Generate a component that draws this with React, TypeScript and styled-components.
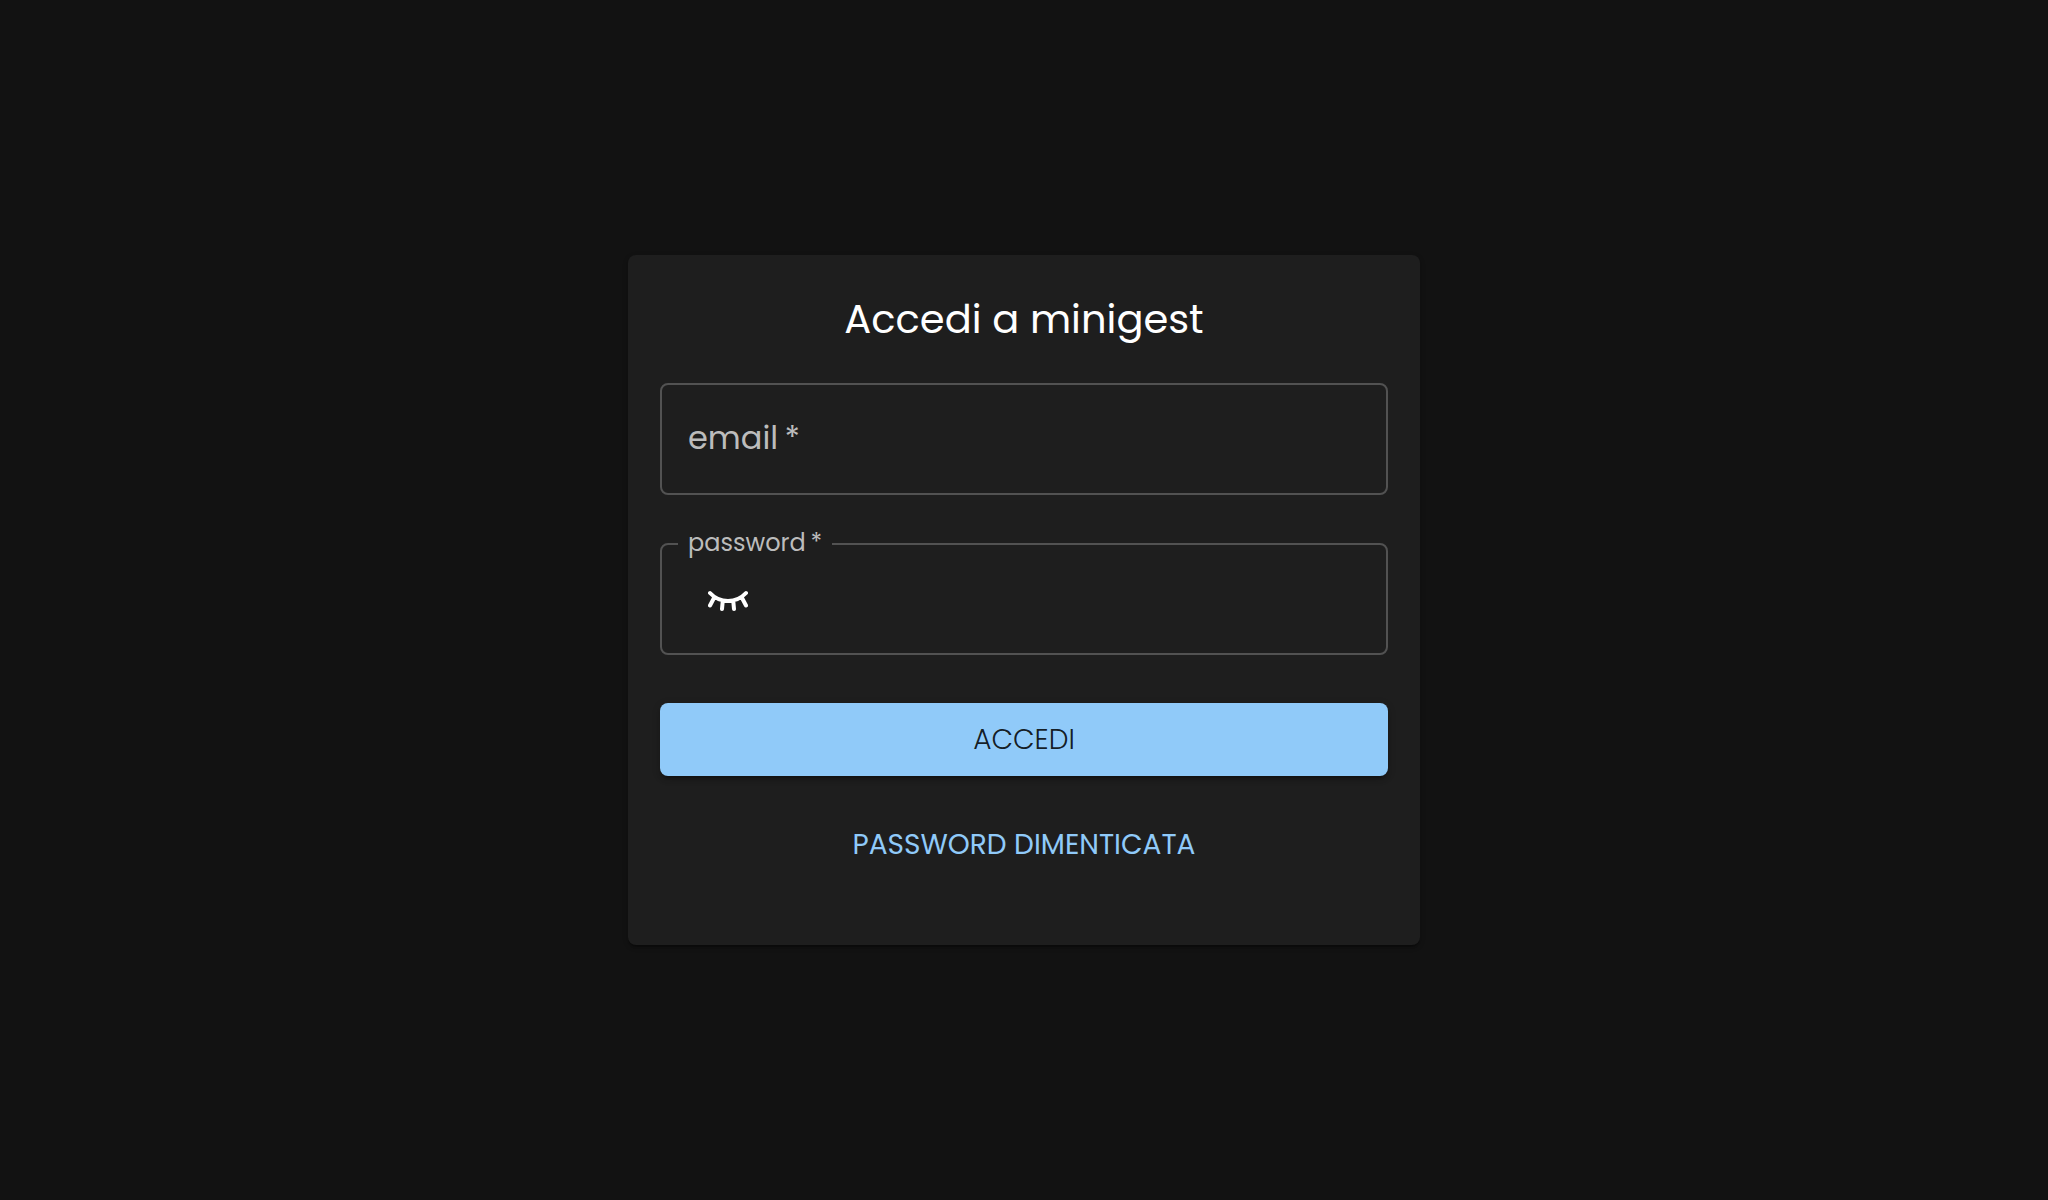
import React, { useState } from "react";
import styled, { createGlobalStyle, css } from "styled-components";

const GlobalStyle = createGlobalStyle`
  *, *::before, *::after { box-sizing: border-box; }
  body {
    margin: 0;
    background: #121212;
    color: #fff;
    font-family: Poppins, Inter, "Open Sans", sans-serif;
    -webkit-font-smoothing: antialiased;
  }
`;

const Page = styled.main`
  min-height: 100vh;
  display: flex;
  align-items: center;
  justify-content: center;
`;

const Card = styled.form`
  width: 100%;
  max-width: 792px;
  padding: 32px 32px 64px;
  display: flex;
  flex-direction: column;
  background: #1e1e1e;
  border-radius: 8px;
  box-shadow: 0 4px 2px -2px rgba(0, 0, 0, 0.2), 0 2px 2px rgba(0, 0, 0, 0.14),
    0 2px 6px rgba(0, 0, 0, 0.12);
`;

const Title = styled.h1`
  margin: 0 0 32px;
  font-size: 40px;
  font-weight: 400;
  line-height: 64px;
  text-align: center;
`;

const Field = styled.div`
  position: relative;
  display: flex;
  align-items: center;
  height: 112px;
  margin-bottom: 48px;
  padding: 0 26px;
  border: 2px solid #525252;
  border-radius: 8px;

  &:focus-within {
    border-color: #90caf9;
  }
`;

const Label = styled.label<{ $raised?: boolean }>`
  position: absolute;
  color: #bcbcbc;
  pointer-events: none;
  ${(p) =>
    p.$raised
      ? css`
          top: -18px;
          left: 16px;
          padding: 0 10px;
          background: #1e1e1e;
          font-size: 24px;
          line-height: 32px;
        `
      : css`
          top: 30px;
          left: 26px;
          font-size: 32px;
          line-height: 46px;
        `}
`;

const Input = styled.input`
  flex: 1;
  min-width: 0;
  height: 100%;
  padding: 0;
  border: 0;
  outline: 0;
  background: transparent;
  color: #fff;
  font: inherit;
  font-size: 32px;
`;

const IconButton = styled.button`
  display: flex;
  padding: 16px 20px;
  border: 0;
  border-radius: 50%;
  background: transparent;
  color: #fff;
  cursor: pointer;
`;

const Button = styled.button<{ $filled?: boolean }>`
  padding: 12px 32px;
  border: 0;
  border-radius: 8px;
  font: inherit;
  font-size: 28px;
  line-height: 49px;
  text-transform: uppercase;
  cursor: pointer;
  ${(p) =>
    p.$filled
      ? css`
          margin-bottom: 32px;
          background: #90caf9;
          color: rgba(0, 0, 0, 0.87);
          font-weight: 300;
          box-shadow: 0 6px 2px -4px rgba(0, 0, 0, 0.2),
            0 4px 4px rgba(0, 0, 0, 0.14), 0 2px 10px rgba(0, 0, 0, 0.12);
        `
      : css`
          align-self: center;
          background: transparent;
          color: #90caf9;
          font-weight: 400;
        `}
`;

function ClosedEye() {
  return (
    <svg width="40" height="40" viewBox="0 0 40 40" fill="none" stroke="currentColor" strokeWidth="4" strokeLinecap="round" aria-hidden="true">
      <path d="M2 14A24.5 24.5 0 0 0 38 14M6.5 18 2 26.5M14.7 22.5 14 30M25.3 22.5 26 30M33.5 18 38 26.5" />
    </svg>
  );
}

export default function App() {
  const [email, setEmail] = useState("");
  const [visible, setVisible] = useState(false);

  return (
    <Page>
      <GlobalStyle />
      <Card onSubmit={(e) => e.preventDefault()}>
        <Title>Accedi a minigest</Title>
        <Field>
          <Label htmlFor="email" $raised={email !== ""}>email&thinsp;*</Label>
          <Input id="email" type="email" required value={email} onChange={(e) => setEmail(e.target.value)} />
        </Field>
        <Field>
          <Label htmlFor="password" $raised>password&thinsp;*</Label>
          <IconButton type="button" aria-label="mostra password" onClick={() => setVisible(!visible)}>
            <ClosedEye />
          </IconButton>
          <Input id="password" type={visible ? "text" : "password"} required />
        </Field>
        <Button type="submit" $filled>Accedi</Button>
        <Button type="button">Password dimenticata</Button>
      </Card>
    </Page>
  );
}
